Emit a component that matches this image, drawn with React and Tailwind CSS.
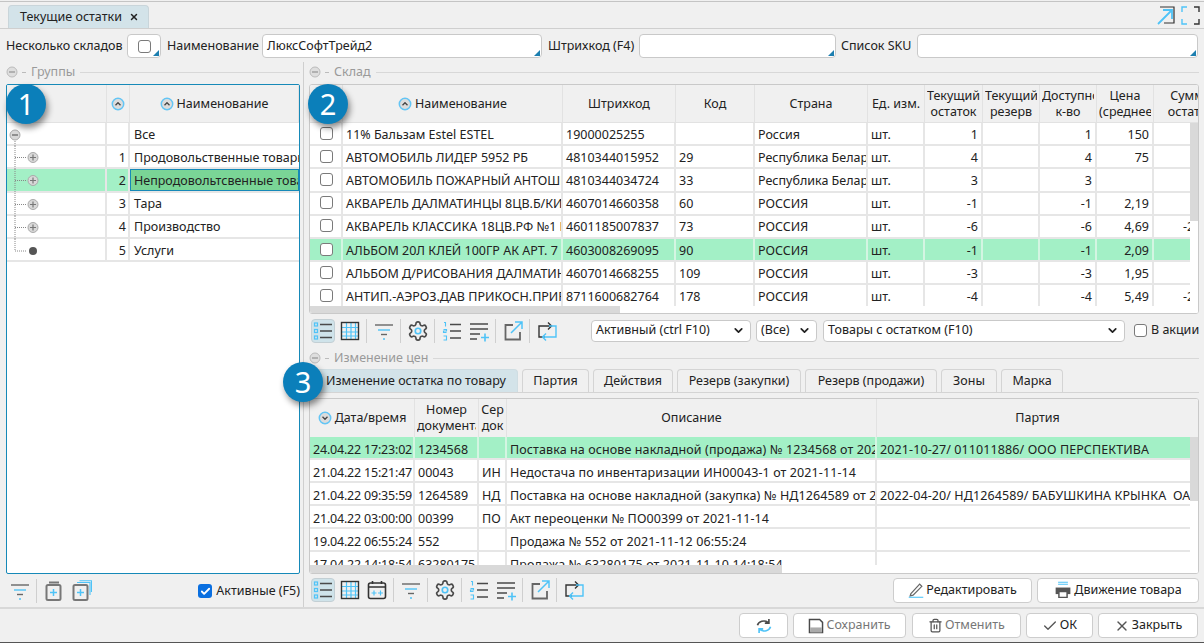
import { ChevronDown, Check, X, Trash2 } from "lucide-react";

const DARK = "#4a4a4a";
const BLUE = "#4fc3f7";

const stock = [
  ["11% Бальзам Estel ESTEL", "19000025255", "", "Россия", "шт.", "1", "1", "150", "150"],
  ["АВТОМОБИЛЬ ЛИДЕР 5952 РБ", "4810344015952", "29", "Республика Беларусь", "шт.", "4", "4", "75", "300"],
  ["АВТОМОБИЛЬ ПОЖАРНЫЙ АНТОШКА", "4810344034724", "33", "Республика Беларусь", "шт.", "3", "3", "", ""],
  ["АКВАРЕЛЬ ДАЛМАТИНЦЫ 8ЦВ.Б/КИСТИ", "4607014660358", "60", "РОССИЯ", "шт.", "-1", "-1", "2,19", "-2,19"],
  ["АКВАРЕЛЬ КЛАССИКА 18ЦВ.РФ №1 ШКОЛА", "4601185007837", "73", "РОССИЯ", "шт.", "-6", "-6", "4,69", "-28,14"],
  ["АЛЬБОМ 20Л КЛЕЙ 100ГР АК АРТ. 7", "4603008269095", "90", "РОССИЯ", "шт.", "-1", "-1", "2,09", "-2,09"],
  ["АЛЬБОМ Д/РИСОВАНИЯ ДАЛМАТИНЦЫ", "4607014668255", "109", "РОССИЯ", "шт.", "-3", "-3", "1,95", "-5,85"],
  ["АНТИП.-АЭРОЗ.ДАВ ПРИКОСН.ПРИРОДЫ", "8711600682764", "178", "РОССИЯ", "шт.", "-4", "-4", "5,49", "-21,96"],
];

const moves = [
  ["24.04.22 17:23:02", "1234568", "", "Поставка на основе накладной (продажа) № 1234568 от 2021-10-27", "2021-10-27/ 011011886/ ООО ПЕРСПЕКТИВА"],
  ["21.04.22 15:21:47", "00043", "ИН", "Недостача по инвентаризации ИН00043-1 от 2021-11-14", ""],
  ["21.04.22 09:35:59", "1264589", "НД", "Поставка на основе накладной (закупка) № НД1264589 от 2022-04-20", "2022-04-20/ НД1264589/ БАБУШКИНА КРЫНКА \u00a0ОАО"],
  ["21.04.22 03:00:00", "00399", "ПО", "Акт переоценки № ПО00399 от 2021-11-14", ""],
  ["19.04.22 06:55:24", "552", "", "Продажа № 552 от 2021-11-12 06:55:24", ""],
  ["17.04.22 14:18:54", "63280175", "", "Продажа № 63280175 от 2021-11-10 14:18:54", ""],
];

const groups = [
  ["1", "Продовольственные товары"],
  ["2", "Непродовольтсвенные товары"],
  ["3", "Тара"],
  ["4", "Производство"],
  ["5", "Услуги"],
];

function Ico({ children, size = 22 }) {
  return (
    <svg width={size} height={size} viewBox="0 0 22 22" fill="none" strokeWidth="1.6">
      {children}
    </svg>
  );
}

const ListIcon = () => (
  <Ico>
    <g stroke={BLUE} strokeWidth="1.2">
      <rect x="2.5" y="3" width="3" height="3" />
      <rect x="2.5" y="9.5" width="3" height="3" />
      <rect x="2.5" y="16" width="3" height="3" />
    </g>
    <path d="M8 4.5h12M8 11h12M8 17.5h12" stroke={DARK} strokeWidth="1.6" />
  </Ico>
);
const GridIcon = () => (
  <Ico>
    <path d="M7.500 3v16M12 3v16M16.500 3v16M3 7.500h16M3 12h16M3 16h16" stroke={BLUE} strokeWidth="1.2" />
    <rect x="2.500" y="2.500" width="17" height="17" stroke="#333" strokeWidth="1.4" />
  </Ico>
);
const CalendarIcon = () => (
  <Ico>
    <rect x="2.500" y="4" width="17" height="15.500" rx="2" stroke="#333" />
    <path d="M2.500 8h17M6.500 2v3M15.500 2v3" stroke="#333" />
    <path d="M5.500 14h5M8 11.500v5M12 14h5M14.500 11.500v5" stroke={BLUE} strokeWidth="1.2" />
  </Ico>
);
const FilterIcon = () => (
  <Ico>
    <path d="M2 5h18" stroke="#666" strokeWidth="1.4" />
    <path d="M5 10h12" stroke={BLUE} strokeWidth="1.4" />
    <path d="M8 14.500h6" stroke="#666" strokeWidth="1.4" />
    <path d="M10 19h2" stroke={BLUE} strokeWidth="1.4" />
  </Ico>
);
const GearIcon = () => (
  <svg width="22" height="22" viewBox="0 0 24 24" fill="none" strokeWidth="1.8">
    <path
      stroke={DARK}
      d="M12.220 2h-.44a2 2 0 0 0-2 2v.18a2 2 0 0 1-1 1.730l-.43.25a2 2 0 0 1-2 0l-.15-.08a2 2 0 0 0-2.730.73l-.22.38a2 2 0 0 0 .73 2.730l.15.1a2 2 0 0 1 1 1.720v.51a2 2 0 0 1-1 1.740l-.15.09a2 2 0 0 0-.73 2.730l.22.38a2 2 0 0 0 2.730.73l.15-.08a2 2 0 0 1 2 0l.43.25a2 2 0 0 1 1 1.730V20a2 2 0 0 0 2 2h.44a2 2 0 0 0 2-2v-.18a2 2 0 0 1 1-1.730l.43-.25a2 2 0 0 1 2 0l.15.08a2 2 0 0 0 2.730-.73l.22-.39a2 2 0 0 0-.73-2.730l-.15-.08a2 2 0 0 1-1-1.740v-.5a2 2 0 0 1 1-1.740l.15-.09a2 2 0 0 0 .73-2.730l-.22-.38a2 2 0 0 0-2.730-.73l-.15.08a2 2 0 0 1-2 0l-.43-.25a2 2 0 0 1-1-1.730V4a2 2 0 0 0-2-2z"
    />
    <circle cx="12" cy="12" r="3" stroke={BLUE} />
  </svg>
);
const NumListIcon = () => (
  <Ico>
    <path d="M3 2.500h1.500v4M2.500 9.500h3v1.500h-3v1.500h3M2.500 16h3v4h-3" stroke={BLUE} strokeWidth="1.100" />
    <path d="M9 4.500h11M9 11h11M9 18h11" stroke={DARK} strokeWidth="1.500" />
  </Ico>
);
const AddListIcon = () => (
  <Ico>
    <path d="M2 4h18M2 9h18M2 14h10M2 19h7" stroke={DARK} strokeWidth="1.400" />
    <path d="M13 17.500h8M17 13.500v8" stroke={BLUE} strokeWidth="1.600" />
  </Ico>
);
const ExportIcon = () => (
  <Ico>
    <path d="M11 5H3.500v14.500H18V12" stroke="#666" strokeWidth="1.800" />
    <path d="M9 13L20 2M13 2h7v7" stroke={BLUE} strokeWidth="1.500" />
  </Ico>
);
const SwapIcon = () => (
  <Ico>
    <path d="M9 17H3V6h12M12 2.500L15.500 6 12 9.500" stroke="#333" strokeWidth="1.400" />
    <path d="M13 6h7v11H7M10 13.500L6.500 17l3.500 3.500" stroke={BLUE} strokeWidth="1.400" />
  </Ico>
);
const PageAddIcon = ({ double }) => (
  <Ico>
    {double ? (
      <path d="M7 2.500h13V15M9.500 0.800h12V12" stroke={BLUE} strokeWidth="1.100" />
    ) : (
      <path d="M6 2.500h10" stroke="#777" strokeWidth="2" />
    )}
    <rect x="3.500" y="5" width="14" height="15" rx="1.500" stroke="#777" strokeWidth="2" fill="#f0f0f0" />
    <path d="M10.500 9v7M7 12.500h7" stroke={BLUE} strokeWidth="1.500" />
  </Ico>
);
const RefreshIcon = () => (
  <Ico size={18}>
    <path d="M3 10a8 6.500 0 0 1 13-3.500M17 2.500v5h-5" stroke={DARK} strokeWidth="2" />
    <path d="M19 12a8 6.500 0 0 1-13 3.500M5 19.500v-5h5" stroke={BLUE} strokeWidth="2" />
  </Ico>
);
const SaveIcon = () => (
  <Ico size={16}>
    <path d="M3 2h13l4 4v14H2V2z" fill="#fff" stroke={DARK} strokeWidth="2" />
    <path d="M3 13h16v7H3z" fill="#aaa" />
  </Ico>
);
const PrinterIcon = () => (
  <Ico size={18}>
    <path d="M5 1.500h12M5 4h12" stroke={BLUE} strokeWidth="1.400" />
    <path d="M2 8h18v8H2z" fill="#555" />
    <path d="M6 13h10v7H6z" fill="#fff" stroke="#555" strokeWidth="1.800" />
  </Ico>
);
const PencilIcon = () => (
  <Ico size={16}>
    <path d="M4 16L16 3l3 3L7 18l-4 1z" stroke="#666" strokeWidth="1.700" />
    <path d="M1 21h20" stroke={BLUE} strokeWidth="1.500" />
  </Ico>
);

function Corner() {
  return (
    <svg className="absolute bottom-px right-px" width="6" height="6" viewBox="0 0 6 6">
      <path d="M6 0v6H0z" fill="#1c7fb0" />
    </svg>
  );
}

function SortIcon({ down }) {
  return (
    <svg width="14" height="14" viewBox="0 0 14 14" className="shrink-0">
      <circle cx="7" cy="7" r="5.700" fill="#dcdcdc" stroke="#63c5f5" strokeWidth="1.500" />
      <path d={down ? "M4.500 5.800L7 8.300l2.500-2.500" : "M4.500 8.200L7 5.700l2.500 2.500"} stroke="#444" strokeWidth="1.300" fill="none" />
    </svg>
  );
}

function Legend({ title, className = "" }) {
  return (
    <div className={`flex items-center h-[22px] shrink-0 text-[#9a9a9a] ${className}`}>
      <svg width="12" height="12" viewBox="0 0 12 12" className="shrink-0">
        <circle cx="6" cy="6" r="5" fill="#dedede" stroke="#bbb" />
        <path d="M3 6h6" stroke="#999" strokeWidth="1.300" />
      </svg>
      <span className="w-[4px] h-px bg-[#bbb] ml-[4px] mr-[5px]" />
      <span>{title}</span>
      <span className="flex-1 h-px bg-[#d8d8d8] ml-[5px]" />
    </div>
  );
}

function Box({ className = "", children }) {
  return (
    <div className={`relative h-6 bg-white border border-[#c9c9c9] rounded flex items-center px-1 shrink-0 ${className}`}>
      {children}
      <Corner />
    </div>
  );
}

function CheckBox() {
  return <span className="block w-[13px] h-[13px] bg-white border border-[#7a7a7a] rounded-[3px] shrink-0" />;
}

function Select({ className, children }) {
  return (
    <div className={`h-[22px] bg-white border border-[#c9c9c9] rounded flex items-center justify-between pl-1 pr-[5px] shrink-0 ${className}`}>
      <span>{children}</span>
      <ChevronDown size={13} strokeWidth={3.200} color="#222" />
    </div>
  );
}

function ToolBtn({ active, children }) {
  return (
    <div className={`w-[24px] h-[24px] mx-[1.500px] flex items-center justify-center rounded shrink-0 ${active ? "bg-[#cfe3ea] border border-[#c3cfd4]" : ""}`}>
      {children}
    </div>
  );
}

const Sep = () => <span className="w-px h-[24px] bg-[#cfcfcf] mx-[3px] shrink-0" />;

function Btn({ className, muted, children }) {
  return (
    <div className={`h-[25px] bg-white border border-[#cdcdcd] rounded flex items-center justify-center gap-[2px] shrink-0 ${muted ? "text-[#777]" : ""} ${className}`}>
      {children}
    </div>
  );
}

function Cell({ w, align, green, pt = "pt-[3px]", children }) {
  return (
    <div
      className={`h-full shrink-0 border-r-2 px-[3px] flex items-center overflow-hidden whitespace-nowrap ${pt} ${w} ${align === "r" ? "justify-end" : ""} ${green ? "border-[#d4f5e2]" : "border-[#e6e6e6]"}`}
    >
      {children}
    </div>
  );
}

function HeadCell({ w, children }) {
  return (
    <div className={`h-full shrink-0 border-r border-[#e2e2e2] flex items-center justify-center gap-[3px] text-center leading-[16px] overflow-hidden ${w}`}>
      {children}
    </div>
  );
}

// двухстрочный заголовок: слишком длинная строка обрезается справа
function TwoLine({ a, b }) {
  return (
    <div className="w-full px-[2px]">
      <div className="overflow-hidden whitespace-nowrap text-center">{a}</div>
      <div className="overflow-hidden whitespace-nowrap text-center">{b}</div>
    </div>
  );
}

function Tree({ index }) {
  if (index === -1) {
    return (
      <svg width="99" height="23" fill="none" className="shrink-0">
        <path d="M8 18v5" stroke="#888" strokeDasharray="1 1" />
        <circle cx="8" cy="12" r="5" fill="#d8d8d8" stroke="#aaa" />
        <path d="M5 12h6" stroke="#777" strokeWidth="1.300" />
      </svg>
    );
  }
  const last = index === 4;
  return (
    <svg width="99" height="23" fill="none" className="shrink-0">
      <path d={last ? "M8 0v12h12" : "M8 0v23M8 11.500h12"} stroke="#888" strokeDasharray="1 1" />
      {last ? (
        <circle cx="26" cy="12" r="4" fill="#555" />
      ) : (
        <g>
          <circle cx="26" cy="11.500" r="5" fill="#d8d8d8" stroke="#aaa" />
          <path d="M23 11.500h6M26 8.500v6" stroke="#777" strokeWidth="1.200" />
        </g>
      )}
    </svg>
  );
}

function GroupsPanel() {
  return (
    <div className="h-[490px] border border-[#1689b8] rounded-[2px] bg-white flex flex-col overflow-hidden shrink-0">
      <div className="h-[38px] bg-[#f0f0f0] flex shrink-0 border-b border-[#e2e2e2]">
        <HeadCell w="w-[100px]" />
        <HeadCell w="w-[23px]"><SortIcon /></HeadCell>
        <HeadCell w="flex-1"><SortIcon />Наименование</HeadCell>
      </div>
      <div className="flex h-[23.200px] shrink-0 border-b-2 border-[#e6e6e6]">
        <div className="w-[100px] shrink-0 border-r-2 border-[#e6e6e6]"><Tree index={-1} /></div>
        <div className="w-[23px] shrink-0 border-r-2 border-[#e6e6e6]" />
        <div className="flex-1 px-[4px] pt-[3px] flex items-center">Все</div>
      </div>
      {groups.map(([n, name], i) => {
        const sel = i === 1;
        return (
          <div key={n} className={`flex h-[23.200px] shrink-0 border-b-2 whitespace-nowrap border-[#e6e6e6] ${sel ? "bg-[#a3f0c6]" : ""}`}>
            <div className="w-[100px] shrink-0 border-r-2 border-[#e6e6e6]"><Tree index={i} /></div>
            <div className="w-[23px] shrink-0 border-r-2 border-[#e6e6e6] pt-[3px] flex items-center justify-end pr-[2px]">{n}</div>
            <div className={`flex-1 min-w-0 px-[3px] pt-[3px] flex items-center overflow-hidden ${sel ? "bg-[#7ad596] border border-[#1689b8]" : "pl-[4px]"}`}>{name}</div>
          </div>
        );
      })}
    </div>
  );
}

function StockTable() {
  const cols = ["w-[33px]", "w-[220px]", "w-[113px]", "w-[79px]", "w-[113px]", "w-[57px]", "w-[58px]", "w-[57px]", "w-[57px]", "w-[57px]"];
  return (
    <div className="relative h-[230px] border border-[#c9c9c9] rounded-[3px] bg-white flex flex-col overflow-hidden shrink-0">
      <div className="h-[38px] bg-[#f0f0f0] flex shrink-0 border-b border-[#e2e2e2]">
        <HeadCell w={cols[0]} />
        <HeadCell w={cols[1]}><SortIcon />Наименование</HeadCell>
        <HeadCell w={cols[2]}>Штрихкод</HeadCell>
        <HeadCell w={cols[3]}>Код</HeadCell>
        <HeadCell w={cols[4]}>Страна</HeadCell>
        <HeadCell w={cols[5]}>Ед. изм.</HeadCell>
        <HeadCell w={cols[6]}><TwoLine a="Текущий" b="остаток" /></HeadCell>
        <HeadCell w={cols[7]}><TwoLine a="Текущий" b="резерв" /></HeadCell>
        <HeadCell w={cols[8]}><TwoLine a="Доступное" b="к-во" /></HeadCell>
        <HeadCell w={cols[9]}><TwoLine a="Цена" b="(среднее)" /></HeadCell>
        <div className="w-[73px] shrink-0 text-center leading-[16px] flex items-center justify-center overflow-hidden whitespace-nowrap"><span>Сумма<br />остатка</span></div>
      </div>
      <div className="flex-1 min-h-0 overflow-hidden">
        {stock.map((r, i) => {
          const g = i === 5;
          return (
            <div key={r[1]} className={`flex h-[23.200px] border-b-2 border-[#e6e6e6] ${g ? "bg-[#a3f0c6]" : ""}`}>
              <Cell w={cols[0]} green={g}><span className="ml-[7px] -mt-[4px]"><CheckBox /></span></Cell>
              <Cell w={cols[1]} green={g}>{r[0]}</Cell>
              <Cell w={cols[2]} green={g}>{r[1]}</Cell>
              <Cell w={cols[3]} green={g}>{r[2]}</Cell>
              <Cell w={cols[4]} green={g}>{r[3]}</Cell>
              <Cell w={cols[5]} green={g}>{r[4]}</Cell>
              <Cell w={cols[6]} align="r" green={g}>{r[5]}</Cell>
              <Cell w={cols[7]} green={g} />
              <Cell w={cols[8]} align="r" green={g}>{r[6]}</Cell>
              <Cell w={cols[9]} align="r" green={g}>{r[7]}</Cell>
              <Cell w="w-[70px]" align="r" green={g}>{r[8]}</Cell>
            </div>
          );
        })}
      </div>
      <div className="h-[7px] shrink-0 bg-white"><div className="w-[310px] h-full bg-[#d9d9d9]" /></div>
      <div className="absolute right-0 top-[38px] w-2 bottom-0 bg-white"><div className="h-[98px] bg-[#d9d9d9]" /></div>
    </div>
  );
}

function MovesTable() {
  const cols = ["w-[105px]", "w-[64px]", "w-[28px]", "w-[370px]", "w-[322px]"];
  return (
    <div className="relative h-[176px] border border-[#c9c9c9] rounded-[3px] bg-white flex flex-col overflow-hidden shrink-0">
      <div className="h-[38px] bg-[#f0f0f0] flex shrink-0">
        <HeadCell w={cols[0]}><SortIcon down />Дата/время</HeadCell>
        <HeadCell w={cols[1]}><TwoLine a="Номер" b="документа" /></HeadCell>
        <HeadCell w={cols[2]}><TwoLine a="Сер" b="док" /></HeadCell>
        <HeadCell w={cols[3]}>Описание</HeadCell>
        <HeadCell w={cols[4]}>Партия</HeadCell>
      </div>
      <div className="flex-1 min-h-0 overflow-hidden">
        {moves.map((r, i) => {
          const g = i === 0;
          return (
            <div key={r[0]} className={`flex h-[23px] border-b-2 border-[#e6e6e6] ${g ? "bg-[#a3f0c6]" : ""}`}>
              <Cell w={cols[0]} green={g} pt="pt-[5px]"><span className="tracking-[-0.2px]">{r[0]}</span></Cell>
              <Cell w={cols[1]} green={g} pt="pt-[5px]">{r[1]}</Cell>
              <Cell w={cols[2]} green={g} pt="pt-[5px]">{r[2]}</Cell>
              <Cell w={cols[3]} green={g} pt="pt-[5px]"><span className="tracking-[0.1px]">{r[3]}</span></Cell>
              <Cell w={cols[4]} green={g} pt="pt-[5px]"><span className="tracking-[0.1px]">{r[4]}</span></Cell>
            </div>
          );
        })}
      </div>
      <div className="h-2 shrink-0 bg-white"><div className="w-[472px] h-full bg-[#d9d9d9]" /></div>
      <div className="absolute right-0 top-[38px] w-2 bottom-0 bg-white"><div className="h-[64px] bg-[#d9d9d9]" /></div>
    </div>
  );
}

function Badge({ n, className }) {
  return (
    <div className={`absolute w-10 h-10 rounded-full bg-[#0b7fba] text-white text-[29px] flex items-center justify-center shadow-[2px_4px_6px_rgba(0,0,0,0.45)] ${className}`}>
      {n}
    </div>
  );
}

const tabCls = "h-[23px] rounded-t border border-b-0 border-[#d4d4d4] flex items-center justify-center";

export default function App() {
  return (
    <div className="relative w-[1204px] h-[643px] overflow-hidden bg-[#f0f0f0] text-[12.500px] text-[#222] font-['Noto_Sans',sans-serif] flex flex-col">
      <div className="h-px bg-[#c4c4c4] mt-px shrink-0" />
      {/* tab strip */}
      <div className="h-[27px] shrink-0 border-b border-[#cfcfcf] flex items-end pl-2 pr-[4px] justify-between">
        <div className="w-[141px] h-[23px] bg-[#d3e3e9] border border-b-0 border-[#c9d5da] rounded-t flex items-center pl-[11px] gap-[7px]">
          <span>Текущие остатки</span>
          <X size={10} strokeWidth={3.500} color="#222" />
        </div>
        <div className="flex items-center gap-[6px] pb-[3px]">
          <svg width="18" height="19" viewBox="0 0 18 19" fill="none">
            <path d="M3 1h14v16H7" stroke="#333" strokeWidth="1.200" />
            <path d="M1 18L15 4M6 4h9v9" stroke={BLUE} strokeWidth="1.800" />
          </svg>
          <svg width="19" height="19" viewBox="0 0 19 19" fill="none" strokeWidth="1.400">
            <path d="M1 6V1h5" stroke={BLUE} />
            <path d="M13 1h5v5" stroke="#333" />
            <path d="M1 13v5h5" stroke={BLUE} />
            <path d="M18 13v5h-5" stroke="#333" />
          </svg>
        </div>
      </div>
      {/* filters */}
      <div className="h-[33px] shrink-0 flex items-center pl-[6px] pt-px whitespace-nowrap">
        <span className="w-[121px]">Несколько складов</span>
        <Box className="w-[34px] justify-center"><CheckBox /></Box>
        <span className="ml-[6px] w-[95px]">Наименование</span>
        <Box className="w-[280px]">ЛюксСофтТрейд2</Box>
        <span className="ml-[6px] w-[91px]">Штрихкод (F4)</span>
        <Box className="w-[197px]" />
        <span className="ml-[5px] w-[76px]">Список SKU</span>
        <Box className="w-[281px]" />
      </div>
      {/* main */}
      <div className="h-[547px] shrink-0 flex border-b-2 border-[#d8d8d8]">
        <div className="w-[304px] shrink-0 border-r border-[#cfcfcf] pl-[6px] pr-[3px] flex flex-col">
          <Legend title="Группы" className="pb-[2px]" />
          <GroupsPanel />
          <div className="flex items-center h-[32px] pt-[2px] whitespace-nowrap">
            <ToolBtn><FilterIcon /></ToolBtn>
            <Sep />
            <ToolBtn><PageAddIcon /></ToolBtn>
            <ToolBtn><PageAddIcon double /></ToolBtn>
            <span className="ml-auto flex items-center gap-[4px]">
              <span className="w-[14px] h-[14px] rounded-[3px] bg-[#0a6fe0] flex items-center justify-center">
                <Check size={11} strokeWidth={4} color="#fff" />
              </span>
              Активные (F5)
            </span>
          </div>
        </div>
        <div className="flex-1 min-w-0 pl-[5px] pr-[5px] flex flex-col whitespace-nowrap">
          <Legend title="Склад" className="pb-[2px]" />
          <StockTable />
          <div className="h-[33px] shrink-0 flex items-center">
            <ToolBtn active><ListIcon /></ToolBtn>
            <ToolBtn><GridIcon /></ToolBtn>
            <Sep />
            <ToolBtn><FilterIcon /></ToolBtn>
            <Sep />
            <ToolBtn><GearIcon /></ToolBtn>
            <Sep />
            <ToolBtn><NumListIcon /></ToolBtn>
            <ToolBtn><AddListIcon /></ToolBtn>
            <Sep />
            <ToolBtn><ExportIcon /></ToolBtn>
            <Sep />
            <ToolBtn><SwapIcon /></ToolBtn>
            <Select className="w-[160px] ml-[31px]">Активный (ctrl F10)</Select>
            <Select className="w-[61px] ml-[5px]">(Все)</Select>
            <Select className="w-[302px] ml-[6px]">Товары с остатком (F10)</Select>
            <span className="ml-[9px] flex items-center gap-[4px]"><CheckBox />В акции</span>
          </div>
          <Legend title="Изменение цен" />
          <div className="h-[24px] shrink-0 border-b border-[#d4d4d4] flex items-end gap-[4px] pl-[3px]">
            <div className="w-[206px] h-[23px] bg-[#d3e3e9] rounded-t border border-b-0 border-[#cfdde2] flex items-center pl-[13px]">Изменение остатка по товару</div>
            <div className={`w-[67px] ${tabCls}`}>Партия</div>
            <div className={`w-[80px] ${tabCls}`}>Действия</div>
            <div className={`w-[124px] ${tabCls}`}>Резерв (закупки)</div>
            <div className={`w-[132px] ${tabCls}`}>Резерв (продажи)</div>
            <div className={`w-[56px] ${tabCls}`}>Зоны</div>
            <div className={`w-[62px] ${tabCls}`}>Марка</div>
          </div>
          <div className="h-[5px] shrink-0" />
          <MovesTable />
          <div className="h-[32px] shrink-0 flex items-center">
            <ToolBtn active><ListIcon /></ToolBtn>
            <ToolBtn><GridIcon /></ToolBtn>
            <ToolBtn><CalendarIcon /></ToolBtn>
            <Sep />
            <ToolBtn><FilterIcon /></ToolBtn>
            <Sep />
            <ToolBtn><GearIcon /></ToolBtn>
            <Sep />
            <ToolBtn><NumListIcon /></ToolBtn>
            <ToolBtn><AddListIcon /></ToolBtn>
            <Sep />
            <ToolBtn><ExportIcon /></ToolBtn>
            <Sep />
            <ToolBtn><SwapIcon /></ToolBtn>
            <Btn className="w-[139px] ml-auto"><PencilIcon />Редактировать</Btn>
            <Btn className="w-[162px] ml-[5px]"><PrinterIcon />Движение товара</Btn>
          </div>
        </div>
      </div>
      {/* footer */}
      <div className="h-[33px] shrink-0 flex items-center justify-end gap-[5px] pr-[6px]">
        <Btn className="w-[49px]"><RefreshIcon /></Btn>
        <Btn className="w-[113px]" muted><SaveIcon />Сохранить</Btn>
        <Btn className="w-[109px] ml-px" muted><Trash2 size={15} color="#555" />Отменить</Btn>
        <Btn className="w-[67px]"><Check size={16} color="#555" />ОК</Btn>
        <Btn className="w-[100px]"><X size={16} color="#555" />Закрыть</Btn>
      </div>
      <div className="flex-1 bg-[#555]" />
      <Badge n="1" className="left-[6px] top-[84px]" />
      <Badge n="2" className="left-[308px] top-[84px]" />
      <Badge n="3" className="left-[283px] top-[362px]" />
    </div>
  );
}
